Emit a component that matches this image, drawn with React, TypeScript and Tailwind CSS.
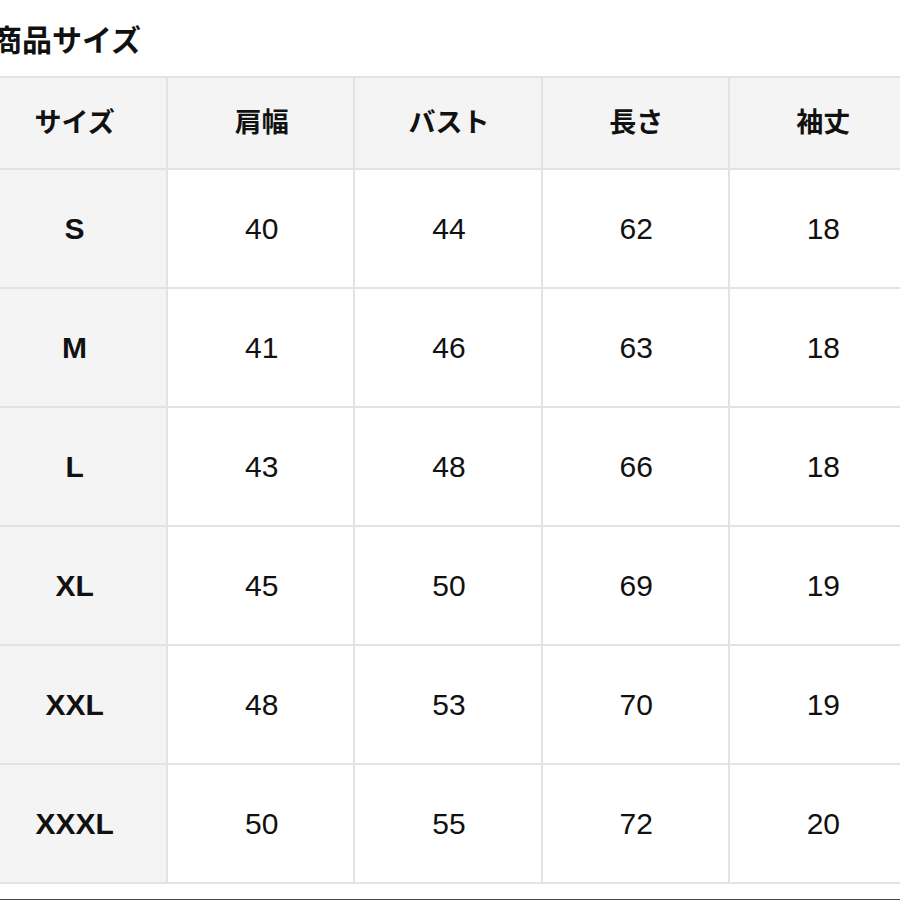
import React from "react";

// ---------------------------------------------------------------------------
// Size chart
// ---------------------------------------------------------------------------

const HEADERS = ["サイズ", "肩幅", "バスト", "長さ", "袖丈"];

const ROWS: [string, number, number, number, number][] = [
  ["S", 40, 44, 62, 18],
  ["M", 41, 46, 63, 18],
  ["L", 43, 48, 66, 18],
  ["XL", 45, 50, 69, 19],
  ["XXL", 48, 53, 70, 19],
  ["XXXL", 50, 55, 72, 20],
];

const FONT = {
  fontFamily: '"Liberation Sans", "Noto Sans CJK JP", sans-serif',
};

export default function App() {
  return (
    <main
      className="w-[900px] h-[900px] overflow-hidden bg-white text-[#111]"
      style={FONT}
    >
      {/* ---- Title ---- */}
      <div className="h-[76px] pt-[26px] ml-[-8px]">
        <h1 className="text-[30px] leading-[30px] font-bold">商品サイズ</h1>
      </div>

      {/* ---- Table ---- */}
      <div className="ml-[-21px] w-[938px] grid grid-cols-[repeat(5,185.2px)] gap-[2px] p-[2px] bg-[#e3e3e3]">
        {HEADERS.map((h) => (
          <div
            key={h}
            className="h-[90px] flex items-center justify-center pl-[2px] bg-[#f4f4f4] text-[27px] font-bold"
          >
            {h}
          </div>
        ))}

        {ROWS.map(([size, ...vals]) => (
          <React.Fragment key={size}>
            <div className="h-[117px] flex items-center justify-center pl-[2px] bg-[#f4f4f4] text-[30px] font-bold">
              {size}
            </div>
            {vals.map((v, i) => (
              <div
                key={i}
                className="h-[117px] flex items-center justify-center pl-[2px] bg-white text-[30px]"
              >
                {v}
              </div>
            ))}
          </React.Fragment>
        ))}
      </div>

      {/* ---- Bottom edge ---- */}
      <div className="mt-[15px] h-[2px] bg-[#4a4a4a]" />
    </main>
  );
}
